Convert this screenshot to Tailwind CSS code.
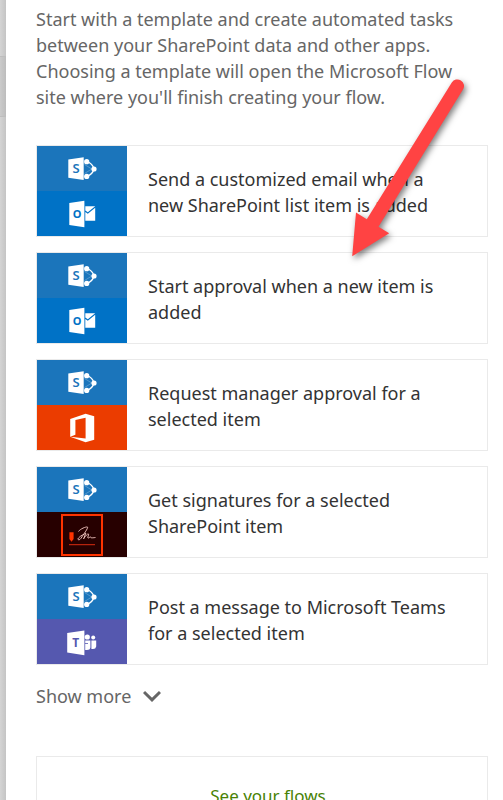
<!DOCTYPE html>
<html lang="en">
<head>
<meta charset="utf-8">
<meta name="viewport" content="width=device-width, initial-scale=1">
<title>Create a flow</title>
<script src="https://cdn.jsdelivr.net/npm/@tailwindcss/browser@4"></script>
</head>
<body class="h-screen overflow-hidden bg-white font-['Noto_Sans','Open_Sans',sans-serif] text-[18px] leading-[26px] text-[#666666]">
<svg class="hidden" aria-hidden="true">
  <symbol id="sharepoint" viewBox="0 0 90 45">
    <path d="M31.3 13.5 46.7 11.3V34L31.3 31.8Z" fill="#fff"/>
    <text x="39.2" y="27.3" text-anchor="middle" font-family="Noto Sans, sans-serif" font-weight="600" font-size="13" fill="#1b75bb">S</text>
    <path d="M50 15.7Q55.5 17.5 57 23Q55.5 28.5 50 30.4" fill="none" stroke="#fff" stroke-width="1.3"/>
    <path d="M47.5 18.5 54.8 23 47.5 27.5" fill="none" stroke="#fff" stroke-width=".5" opacity=".5"/>
    <circle cx="49.7" cy="15.7" r="2.6" fill="#fff"/>
    <circle cx="49.7" cy="30.4" r="2.6" fill="#fff"/>
    <circle cx="57" cy="23" r="2.6" fill="#fff"/>
  </symbol>
  <symbol id="outlook" viewBox="0 0 90 45">
    <path d="M32.3 12 47.4 9.7V36.3L32.3 33.9Z" fill="#fff"/>
    <text x="40" y="27.4" text-anchor="middle" font-family="Noto Sans, sans-serif" font-weight="700" font-size="11" fill="#0072c6">O</text>
    <path d="M48.3 15.3H58.2L50.8 21.3 48.3 19.4ZM58.2 16.8V29.7H48.3V21L50.8 22.8Z" fill="#fff"/>
  </symbol>
  <symbol id="office" viewBox="0 0 90 45">
    <path fill-rule="evenodd" d="M33.2 14 48.6 8.7 57.2 11.2V34.7L48.6 37.3 33.2 31.8 48.6 33.6V12.7L38.4 15V29.7L33.2 31.8Z" fill="#fff"/>
  </symbol>
  <symbol id="sign" viewBox="0 0 90 45">
    <rect x="25" y="3" width="40" height="40" fill="none" stroke="#ff3300" stroke-width="2"/>
    <path d="M32.4 20.3H36.6V27L34.5 29.8 32.4 27Z" fill="#ff3300"/>
    <path d="M32 32.7H58" stroke="#d92c10" stroke-width="1"/>
    <path d="M41.5 19.5C43 17 49 14.5 50.5 15C51.5 16 46 23 44 26.3C42 29 40 27.5 41.5 26C43.5 23.5 47 22.5 48.8 21.2L46.6 26.8C48.5 24 50.5 21.5 51.5 22C52.2 22.6 50 25.5 51 26C52 26.3 53 24.5 53.8 25C54 26 54.5 26 58.5 25.5" fill="none" stroke="#f7cbc5" stroke-width=".9"/>
  </symbol>
  <symbol id="teams" viewBox="0 0 90 45">
    <path d="M30.2 14 47.4 11.5V36.2L30.2 33.5Z" fill="#fff"/>
    <text x="38.7" y="28" text-anchor="middle" font-family="Noto Sans, sans-serif" font-weight="700" font-size="12" fill="#5558af">T</text>
    <circle cx="50.3" cy="18" r="2.6" fill="#fff"/>
    <circle cx="56.2" cy="18.6" r="2" fill="#fff"/>
    <path d="M48.2 21.6H53.4V28.5Q53 31 50 31H48.2ZM54.4 21.6H59.2V27.5Q58.8 30 56 30H54.4Z" fill="#fff"/>
    <path d="M48 24.5H51" stroke="#5558af" stroke-width=".8"/>
  </symbol>
</svg>

<div class="flex h-full">
  <div class="flex w-[6px] shrink-0 flex-col bg-linear-to-r from-[#d4d4d4] to-[#c4c4c4]" aria-hidden="true">
    <div class="h-14"></div>
    <div class="h-[61px] border-y border-[#bdbdbd] bg-black/4"></div>
  </div>

  <main class="flex min-w-0 flex-1 flex-col pt-[6px] pr-[15px] pl-[30px]">
    <p class="whitespace-nowrap">Start with a template and create automated tasks<br>between your SharePoint data and other apps.<br>Choosing a template will open the Microsoft Flow<br>site where you'll finish creating your flow.</p>

    <ul class="mt-[35px] flex flex-col gap-[15px] text-[#333333]">
      <li><a href="#" class="flex border border-[#eaeaea]">
        <span class="flex w-[90px] shrink-0 flex-col">
          <svg class="h-[45px] bg-[#1b75bb]" aria-hidden="true"><use href="#sharepoint"/></svg>
          <svg class="h-[45px] bg-[#0072c6]" aria-hidden="true"><use href="#outlook"/></svg>
        </span>
        <span class="self-center pt-[2px] pl-[21px] whitespace-nowrap">Send a customized email when a<br>new SharePoint list item is added</span>
      </a></li>
      <li><a href="#" class="flex border border-[#eaeaea]">
        <span class="flex w-[90px] shrink-0 flex-col">
          <svg class="h-[45px] bg-[#1b75bb]" aria-hidden="true"><use href="#sharepoint"/></svg>
          <svg class="h-[45px] bg-[#0072c6]" aria-hidden="true"><use href="#outlook"/></svg>
        </span>
        <span class="self-center pt-[2px] pl-[21px] whitespace-nowrap">Start approval when a new item is<br>added</span>
      </a></li>
      <li><a href="#" class="flex border border-[#eaeaea]">
        <span class="flex w-[90px] shrink-0 flex-col">
          <svg class="h-[45px] bg-[#1b75bb]" aria-hidden="true"><use href="#sharepoint"/></svg>
          <svg class="h-[45px] bg-[#eb3c00]" aria-hidden="true"><use href="#office"/></svg>
        </span>
        <span class="self-center pt-[2px] pl-[21px] whitespace-nowrap">Request manager approval for a<br>selected item</span>
      </a></li>
      <li><a href="#" class="flex border border-[#eaeaea]">
        <span class="flex w-[90px] shrink-0 flex-col">
          <svg class="h-[45px] bg-[#1b75bb]" aria-hidden="true"><use href="#sharepoint"/></svg>
          <svg class="h-[45px] bg-[#270000]" aria-hidden="true"><use href="#sign"/></svg>
        </span>
        <span class="self-center pt-[2px] pl-[21px] whitespace-nowrap">Get signatures for a selected<br>SharePoint item</span>
      </a></li>
      <li><a href="#" class="flex border border-[#eaeaea]">
        <span class="flex w-[90px] shrink-0 flex-col">
          <svg class="h-[45px] bg-[#1b75bb]" aria-hidden="true"><use href="#sharepoint"/></svg>
          <svg class="h-[45px] bg-[#5558af]" aria-hidden="true"><use href="#teams"/></svg>
        </span>
        <span class="self-center pt-[2px] pl-[21px] whitespace-nowrap">Post a message to Microsoft Teams<br>for a selected item</span>
      </a></li>
    </ul>

    <button type="button" class="mt-[18px] flex items-center gap-3 self-start">
      <span>Show more</span>
      <svg class="h-3 w-[18px]" viewBox="0 0 18 12" fill="none" stroke="#666" stroke-width="3" aria-hidden="true"><path d="M1 2 9 9.8 17 2"/></svg>
    </button>

    <a href="#" class="mt-[47px] flex h-24 shrink-0 justify-center border border-[#eaeaea] pt-[26px] pl-3 text-[17px] text-[#498205]">See your flows</a>
  </main>
</div>

<svg class="pointer-events-none absolute top-[70px] left-[340px] h-[210px] w-[140px] drop-shadow-[2px_3px_3px_rgba(0,0,0,0.5)]" viewBox="340 70 140 210" fill="#ff4343" aria-hidden="true">
  <path d="M352.2 256.3 356 212.6 366.8 219.2 451.8 82.5A6.6 6.6 0 0 1 463 89.5L378.5 226.7 389.2 233.3Z"/>
</svg>
</body>
</html>
